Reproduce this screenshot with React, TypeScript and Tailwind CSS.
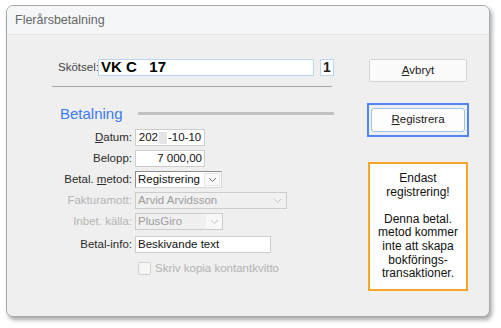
import React from "react";

const font = { fontFamily: '"Liberation Sans", Arial, sans-serif' };

const Chevron: React.FC<{ light?: boolean }> = ({ light }) => (
  <svg width="9" height="6" viewBox="0 0 9 6" fill="none">
    <path d="M1 1l3.5 3.5L8 1" stroke={light ? "#c4c4c4" : "#6b6b6b"} strokeWidth="1" />
  </svg>
);

const Label: React.FC<{ children: React.ReactNode; disabled?: boolean }> = ({ children, disabled }) => (
  <div className={`w-[83px] pr-[3px] text-right text-[11.5px] leading-none ${disabled ? "text-[#b5b5b5]" : "text-[#2b2b2b]"}`}>
    {children}
  </div>
);

const App: React.FC = () => {
  return (
    <div className="h-[328px] w-[501px] bg-white pl-[6px] pt-[5px]" style={font}>
      <div className="h-[312px] w-[484px] overflow-hidden rounded-[7px] border border-[#a9a9a9] bg-[#efefef] shadow-[2px_3px_4px_rgba(0,0,0,0.35)]">
        {/* title bar */}
        <div className="flex h-[29px] items-center border-b border-[#e2e6e9] bg-[#f4f6f7] pl-[8px] text-[12.5px] text-[#666]">
          Flerårsbetalning
        </div>

        <div className="flex pl-[45px] pt-[24px]">
          {/* left column */}
          <div className="w-[282px]">
            <div className="flex h-[17px] items-center pl-[6px]">
              <span className="w-[39px] text-[11.5px] text-[#444]">Skötsel:</span>
              <div className="ml-[1px] flex h-[17px] w-[216px] items-center border border-[#b9d7f3] bg-white pl-[2px] text-[15px] font-bold text-black">
                <span className="whitespace-pre">VK C   17</span>
              </div>
              <div className="ml-[6px] flex h-[17px] w-[14px] items-center justify-center border border-[#b9d7f3] bg-white text-[14px] font-bold text-[#222]">
                1
              </div>
            </div>

            <div className="mt-[10px] h-px w-[280px] bg-[#a7a7a7]" />

            <div className="mt-[19px] flex items-center">
              <span className="pl-[8px] text-[15px] leading-none text-[#3c7bf3]">Betalning</span>
              <div className="ml-[15px] h-[3px] flex-1 bg-[#c2c2c2]" />
            </div>

            <div className="mt-[8px] flex flex-col gap-[4px]">
              <div className="flex h-[17px] items-center">
                <Label>
                  <span className="underline">D</span>atum:
                </Label>
                <div className="flex h-[17px] w-[70px] items-center justify-center border border-[#cdcdcd] bg-white text-[11.5px] text-[#111]">
                  202<span className="mx-[1px] inline-block h-[12px] w-[8px] bg-[#e6e6e6]" />-10-10
                </div>
              </div>

              <div className="flex h-[17px] items-center">
                <Label>Belopp:</Label>
                <div className="flex h-[17px] w-[70px] items-center justify-end border border-[#cdcdcd] bg-white pr-[2px] text-[11.5px] text-[#111]">
                  7 000,00
                </div>
              </div>

              <div className="flex h-[17px] items-center">
                <Label>
                  Betal. <span className="underline">m</span>etod:
                </Label>
                <div className="flex h-[17px] w-[87px] border-l border-t border-[#8d8d8d] border-b-[#d6d6d6] border-r-[#d6d6d6] border-b border-r bg-white">
                  <div className="flex flex-1 items-center pl-[2px] text-[11.5px] text-[#111]">Registrering</div>
                  <div className="m-[1px] flex w-[16px] items-center justify-center border border-[#e4e4e4] bg-[#fafafa]">
                    <Chevron />
                  </div>
                </div>
              </div>

              <div className="flex h-[17px] items-center">
                <Label disabled>Fakturamott:</Label>
                <div className="flex h-[17px] w-[152px] border border-[#cccccc] bg-[#f0f0f0]">
                  <div className="flex flex-1 items-center pl-[2px] text-[11.5px] text-[#9c9c9c]">Arvid Arvidsson</div>
                  <div className="flex w-[17px] items-center justify-center">
                    <Chevron light />
                  </div>
                </div>
              </div>

              <div className="flex h-[17px] items-center">
                <Label disabled>Inbet. källa:</Label>
                <div className="flex h-[17px] w-[88px] border border-[#cccccc] bg-[#f0f0f0]">
                  <div className="flex flex-1 items-center pl-[2px] text-[11.5px] text-[#9c9c9c]">PlusGiro</div>
                  <div className="flex w-[16px] items-center justify-center bg-[#f7f7f7]">
                    <Chevron light />
                  </div>
                </div>
              </div>

              <div className="mt-[2px] flex h-[17px] items-center">
                <Label>Betal-info:</Label>
                <div className="flex h-[17px] w-[136px] items-center border border-[#cdcdcd] bg-white pl-[2px] text-[11.5px] text-[#111]">
                  Beskivande text
                </div>
              </div>

              <div className="mt-[4px] flex h-[15px] items-center pl-[86px]">
                <div className="h-[13px] w-[13px] rounded-[2px] border border-[#d2d2d2] bg-[#f6f6f6]" />
                <span className="ml-[4px] text-[11.5px] text-[#b3b3b3]">Skriv kopia kontantkvitto</span>
              </div>
            </div>
          </div>

          {/* right column */}
          <div className="ml-[33px] flex w-[102px] flex-col items-center">
            <div className="flex h-[23px] w-[98px] items-center justify-center rounded-[2px] border border-[#d4d4d4] bg-[#fbfbfb] text-[11.5px] text-[#222]">
              <span>
                <span className="underline">A</span>vbryt
              </span>
            </div>

            <div className="mt-[21px] flex h-[34px] w-[102px] items-center justify-center border-2 border-[#4e86f7]">
              <div className="flex h-[24px] w-[94px] items-center justify-center rounded-[3px] border border-[#9cc4ea] bg-[#fdfdfd] text-[11.5px] text-[#222]">
                <span>
                  <span className="underline">R</span>egistrera
                </span>
              </div>
            </div>

            <div className="mt-[25px] flex h-[129px] w-[100px] flex-col items-center border-2 border-[#f8a62a] bg-white pt-[8px] text-center text-[12px] leading-[13.6px] text-[#111]">
              <div>Endast</div>
              <div>registrering!</div>
              <div className="mt-[13.6px]">Denna betal.</div>
              <div>metod kommer</div>
              <div>inte att skapa</div>
              <div>bokförings-</div>
              <div>transaktioner.</div>
            </div>
          </div>
        </div>
      </div>
    </div>
  );
};

export default App;
